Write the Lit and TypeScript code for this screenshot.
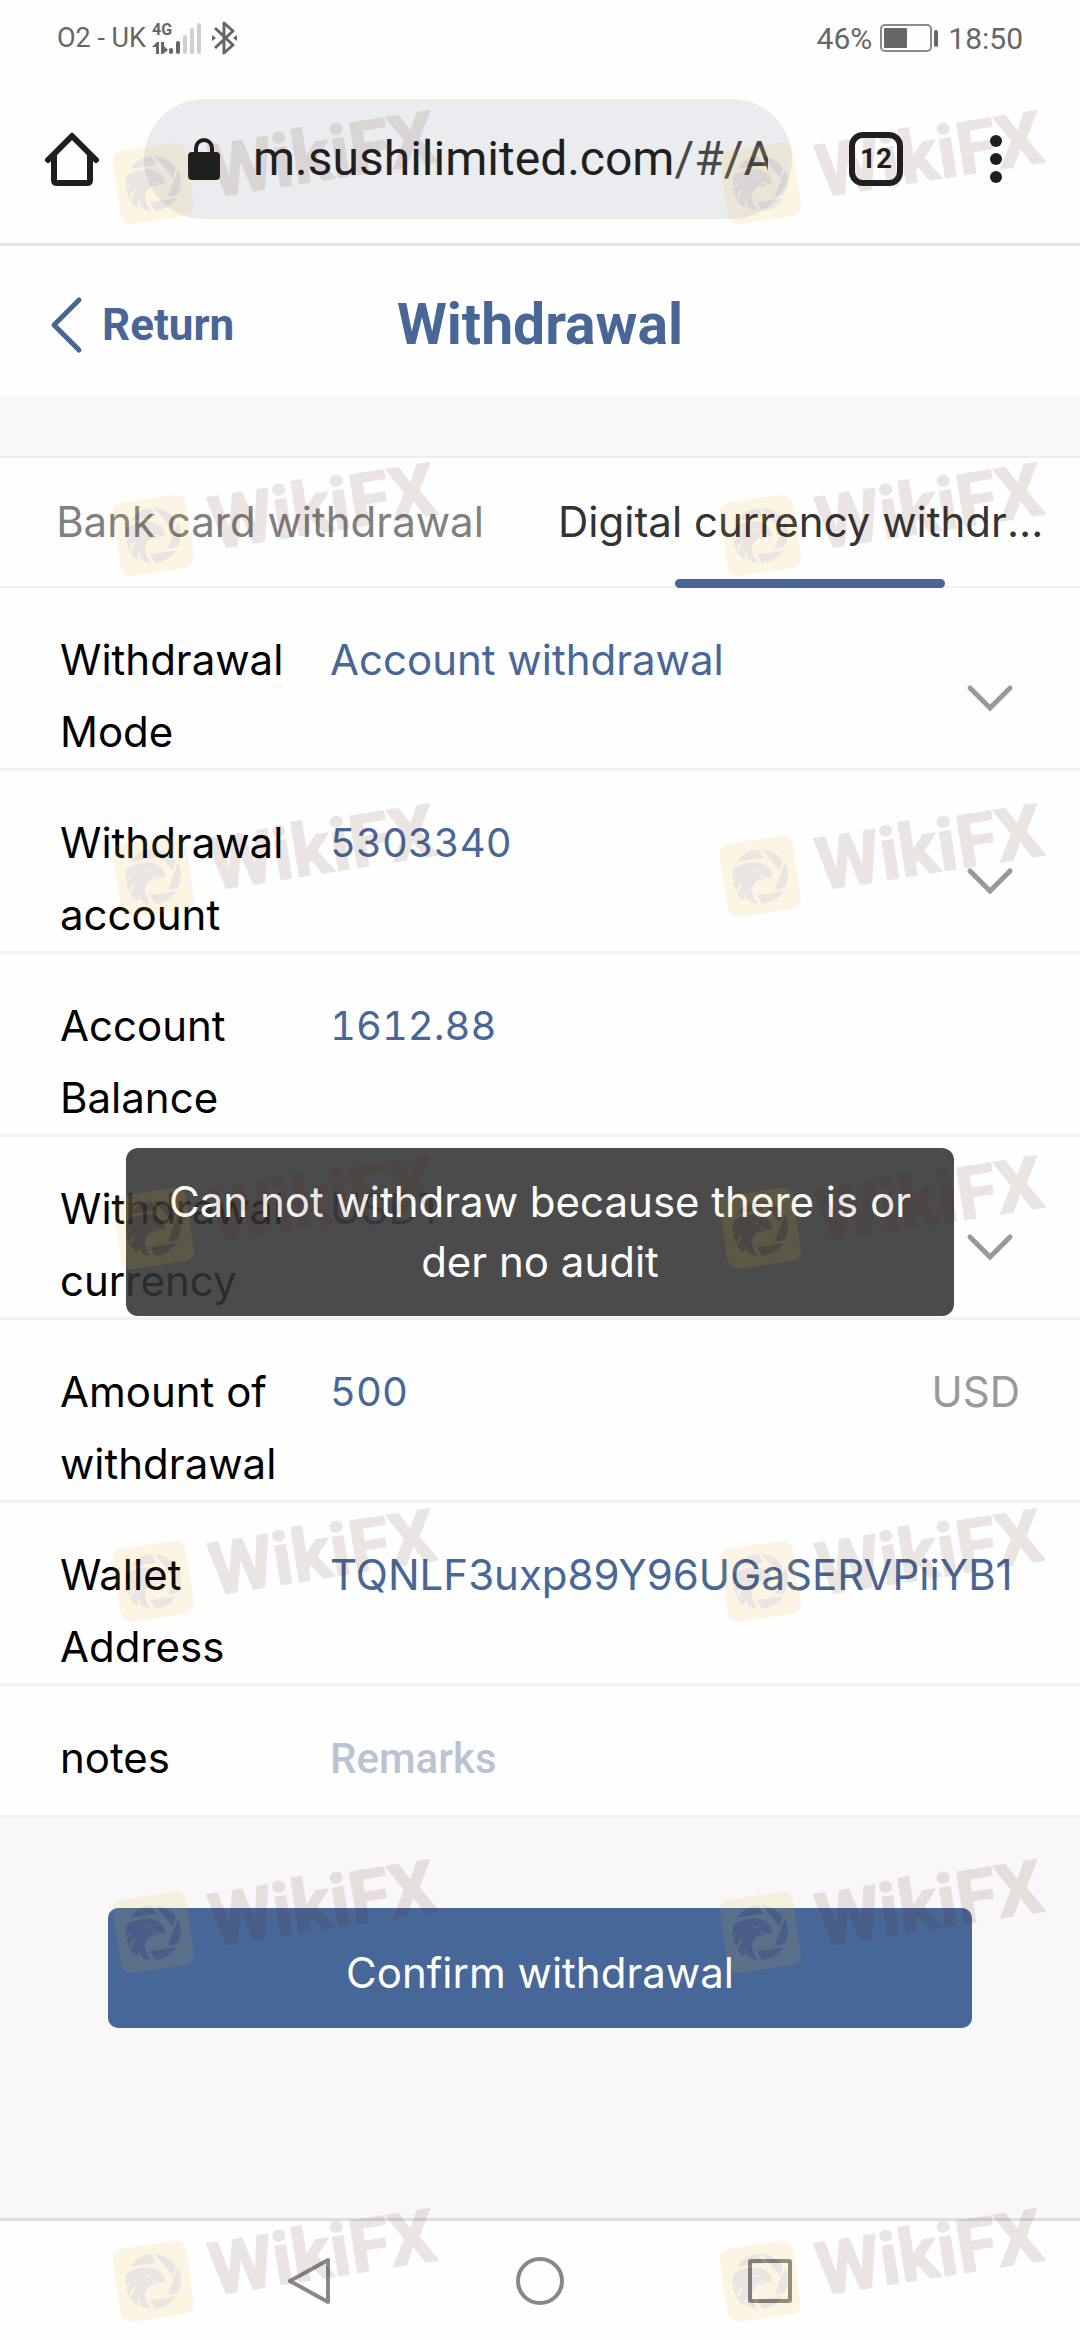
import { LitElement, html, css } from "lit";
import { customElement, property, state } from "lit/decorators.js";
import { classMap } from "lit/directives/class-map.js";

type FieldKind = "select" | "output" | "input";

interface Field {
  id: string;
  label: string;
  value: string;
  kind: FieldKind;
  numeric?: boolean;
  unit?: string;
  placeholder?: string;
}

const FIELDS: Field[] = [
  { id: "mode", label: "Withdrawal Mode", value: "Account withdrawal", kind: "select" },
  { id: "account", label: "Withdrawal account", value: "5303340", kind: "select", numeric: true },
  { id: "balance", label: "Account Balance", value: "1612.88", kind: "output", numeric: true },
  { id: "currency", label: "Withdrawal currency", value: "USDT", kind: "select" },
  { id: "amount", label: "Amount of withdrawal", value: "500", kind: "input", numeric: true, unit: "USD" },
  { id: "wallet", label: "Wallet Address", value: "TQNLF3uxp89Y96UGaSERVPiiYB1", kind: "input" },
  { id: "notes", label: "notes", value: "", kind: "input", placeholder: "Remarks" },
];

const MARK_TOPS = [86, 438, 779, 1131, 1484, 1835, 2184];
const MARK_LEFTS = [93, 700];

@customElement("status-bar")
export class StatusBar extends LitElement {
  static styles = css`
    :host {
      display: flex;
      justify-content: space-between;
      align-items: center;
      height: 76px;
      padding: 0 57px;
      color: #666;
      font-family: Roboto, "Liberation Sans", sans-serif;
    }
    .side {
      display: flex;
      align-items: center;
    }
    .carrier {
      font-size: 27px;
    }
    .signal {
      margin-left: 6px;
    }
    .bluetooth {
      margin-left: 8px;
    }
    .right {
      gap: 8px;
      font-size: 30px;
    }
    svg {
      display: block;
    }
    .net {
      font: 700 16px Roboto, sans-serif;
    }
  `;
  render() {
    return html`
      <div class="side">
        <span class="carrier">O2 - UK</span>
        <svg class="signal" width="52" height="34" viewBox="0 0 52 34" fill="currentColor">
          <text class="net" x="0" y="14">4G</text>
          <path d="M0 26l5-5h2v12H4v-7zM9 21h3v4l4 4-5 4H9z" />
          <rect x="17" y="27" width="4" height="6" rx="2" />
          <rect x="24" y="20" width="4" height="13" rx="2" />
          <g fill="#d0d0d0">
            <rect x="31" y="14" width="4" height="19" rx="2" />
            <rect x="38" y="7" width="4" height="26" rx="2" />
            <rect x="45" y="2" width="4" height="31" rx="2" />
          </g>
        </svg>
        <svg class="bluetooth" width="26" height="34" viewBox="0 0 26 34" fill="none" stroke="currentColor" stroke-width="3">
          <path d="M3 7l18 17-9 8V2l9 8L3 27" stroke-linejoin="round" />
          <path d="M0 14l4 3-4 3zM25 14l-4 3 4 3z" fill="currentColor" stroke="none" />
        </svg>
      </div>
      <div class="side right">
        <span>46%</span>
        <svg width="60" height="30" viewBox="0 0 60 30">
          <rect x="1" y="2" width="50" height="26" rx="4" fill="none" stroke="#8a8a8a" stroke-width="2" />
          <rect x="4" y="5" width="23" height="20" rx="1" fill="#666" />
          <rect x="54" y="7" width="4" height="17" rx="2" fill="#666" />
        </svg>
        <span>18:50</span>
      </div>
    `;
  }
}

@customElement("browser-bar")
export class BrowserBar extends LitElement {
  static styles = css`
    :host {
      display: flex;
      align-items: center;
      height: 120px;
      padding: 23px 66px 24px 45px;
      border-bottom: 3px solid #e1e2e2;
      color: #1f1f1f;
      font-family: Roboto, "Liberation Sans", sans-serif;
    }
    button {
      border: 0;
      padding: 0;
      background: none;
      color: inherit;
      font-family: inherit;
    }
    svg {
      display: block;
    }
    .omnibox {
      flex: 1;
      min-width: 0;
      height: 120px;
      margin: 0 57px 0 45px;
      padding: 0 24px 0 44px;
      border-radius: 60px;
      background: #ebecf0;
      display: flex;
      align-items: center;
      gap: 33px;
    }
    .url {
      flex: 1;
      min-width: 0;
      overflow: hidden;
      white-space: nowrap;
      text-align: left;
      font-size: 48px;
      line-height: 64px;
    }
    .path {
      color: #48484a;
    }
    .lock {
      flex: none;
    }
    .count {
      box-sizing: border-box;
      width: 54px;
      height: 54px;
      border: 6px solid #1f1f1f;
      border-radius: 14px;
      font-size: 28px;
      font-weight: 700;
      line-height: 42px;
    }
    .more {
      margin-left: 75px;
    }
  `;
  render() {
    return html`
      <button aria-label="Home">
        <svg width="54" height="54" viewBox="0 0 54 54" fill="none" stroke="currentColor" stroke-width="6">
          <path d="M9 23v25q0 3 3 3h30q3 0 3-3V23" />
          <path d="M3 28L27 4l24 24" stroke-linecap="round" stroke-linejoin="round" />
        </svg>
      </button>
      <button class="omnibox">
        <svg class="lock" width="32" height="44" viewBox="0 0 32 44">
          <rect y="15" width="32" height="28" rx="4" fill="currentColor" />
          <path d="M8 17v-6a8 8 0 0 1 16 0v6" fill="none" stroke="currentColor" stroke-width="4" />
        </svg>
        <span class="url">m.sushilimited.com<span class="path">/#/A</span></span>
      </button>
      <button class="count" aria-label="Open tabs">12</button>
      <button class="more" aria-label="Menu">
        <svg width="36" height="54" viewBox="0 0 36 54" fill="currentColor">
          <circle cx="18" cy="9" r="6" />
          <circle cx="18" cy="27" r="6" />
          <circle cx="18" cy="45" r="6" />
        </svg>
      </button>
    `;
  }
}

@customElement("form-row")
export class FormRow extends LitElement {
  @property({ attribute: false }) field!: Field;

  static styles = css`
    :host {
      display: flex;
      align-items: flex-start;
      min-height: 93px;
      padding: 36px 60px 0;
      border-bottom: 3px solid #eff2f5;
      font-size: 42px;
      line-height: 72px;
    }
    label {
      flex: none;
      box-sizing: border-box;
      width: 270px;
      padding-right: 36px;
      color: #000;
    }
    .value {
      flex: 1;
      min-width: 0;
      box-sizing: border-box;
      height: 72px;
      margin: 0;
      padding: 0;
      border: 0;
      outline: 0;
      border-radius: 0;
      background: transparent;
      appearance: none;
      color: #486796;
      font: inherit;
      opacity: 1;
    }
    .numeric {
      font-size: 40px;
      font-variant-numeric: tabular-nums;
    }
    .value::placeholder {
      color: #b9c4d3;
      opacity: 1;
      font-family: Roboto, "Liberation Sans", sans-serif;
      font-weight: 500;
    }
    .unit {
      color: #999;
    }
    .arrow {
      align-self: center;
      flex: none;
      margin-right: 6px;
    }
  `;

  private control() {
    const f = this.field;
    const classes = classMap({ value: true, numeric: !!f.numeric });
    if (f.kind === "select") {
      return html`
        <select class=${classes} id=${f.id}>
          <option>${f.value}</option>
        </select>
        <svg class="arrow" width="48" height="32" viewBox="0 0 48 32" fill="none" stroke="#999" stroke-width="5" stroke-linecap="round">
          <path d="M4 8l20 20L44 8" />
        </svg>
      `;
    }
    if (f.kind === "output") {
      return html`<output class=${classes} id=${f.id}>${f.value}</output>`;
    }
    return html`
      <input class=${classes} id=${f.id} type="text" .value=${f.value} placeholder=${f.placeholder ?? ""} />
      ${f.unit ? html`<span class="unit">${f.unit}</span>` : null}
    `;
  }

  render() {
    return html`<label for=${this.field.id}>${this.field.label}</label>${this.control()}`;
  }
}

@customElement("brand-mark")
export class BrandMark extends LitElement {
  static styles = css`
    :host {
      display: block;
      opacity: 0.11;
    }
    svg {
      display: block;
    }
    .word {
      font: 700 219px Roboto, "Liberation Sans", sans-serif;
      fill: #501e0a;
      stroke: #501e0a;
      stroke-width: 5px;
      stroke-linejoin: round;
    }
  `;
  render() {
    return html`
      <svg width="380" height="160" viewBox="0 0 1140 480" aria-hidden="true">
        <rect x="70" y="181" width="222" height="222" rx="30" transform="rotate(-8.5 181 292)" fill="#eeb71a" />
        <g fill="#501e0a">
          <path d="M112 249A82 82 0 0 1 176 210L190 236Z" />
          <path d="M184 210A82 82 0 0 1 248 246L240 275Z" />
          <path d="M255 250A82 82 0 0 1 252 328L224 333Z" />
          <path d="M171 349L250 336A82 82 0 0 1 186 374Z" />
          <path d="M102 268Q140 246 176 251Q205 256 215 284L214 298Q206 292 196 297Q184 304 176 301Q158 312 155 334Q158 354 173 374Q155 372 146 366Q138 356 138 335Q132 350 136 365Q116 356 110 338Q100 322 98 300Q97 282 102 268Z" />
        </g>
        <path d="M155 270q10 8 20 3l-2 6q-12 1-18-9zM176 295q12-8 28-4l-26 6zM100 304q8-10 16-13-10 12-16 22zM110 334q6-18 20-28-10 16-14 34z" fill="#eeb71a" />
        <text class="word" x="362" y="334" transform="rotate(-9 362 334)">WikiFX</text>
      </svg>
    `;
  }
}

@customElement("app-root")
export class AppRoot extends LitElement {
  @state() private active = 1;

  static styles = css`
    :host {
      display: flex;
      flex-direction: column;
      position: relative;
      min-height: 100vh;
      overflow: hidden;
      background: #fefefe;
      font-family: Inter, "Liberation Sans", sans-serif;
    }
    button {
      border: 0;
      padding: 0;
      background: none;
      font: inherit;
      color: inherit;
    }
    svg {
      display: block;
    }
    main {
      flex: 1;
      position: relative;
      background: #f9f7f8;
    }
    .header {
      display: grid;
      grid-template-columns: 1fr auto 1fr;
      align-items: center;
      height: 150px;
      padding: 8px 48px 0;
      box-sizing: border-box;
      background: #fefefe;
      color: #486796;
      font-family: Roboto, "Liberation Sans", sans-serif;
      font-weight: 700;
    }
    .back {
      justify-self: start;
      display: flex;
      align-items: center;
      gap: 18px;
      font-size: 44px;
      text-decoration: none;
      color: inherit;
    }
    h1 {
      margin: 0;
      font-size: 57px;
      line-height: 72px;
    }
    .tabs {
      display: grid;
      grid-template-columns: 1fr 1fr;
      margin-top: 60px;
      background: #fefefe;
      border-top: 2px solid #ebefef;
      border-bottom: 2px solid #eff1f1;
    }
    .tab {
      display: flex;
      flex-direction: column;
      align-items: center;
      min-width: 0;
      height: 128px;
      padding: 0 18px;
      color: #808080;
      font-size: 42px;
      position: relative;
    }
    .tab-text {
      max-width: 100%;
      overflow: hidden;
      text-overflow: ellipsis;
      white-space: nowrap;
      line-height: 128px;
    }
    .tab.on {
      color: #333;
    }
    .tab.on::after {
      content: "";
      position: absolute;
      bottom: -2px;
      width: 50%;
      height: 9px;
      border-radius: 5px;
      background: #486796;
    }
    .form {
      background: #fefefe;
    }
    .confirm {
      display: block;
      width: 80%;
      height: 120px;
      margin: 90px auto 0;
      padding-top: 8px;
      border-radius: 10px;
      background: #486799;
      color: #fff;
      font-size: 42px;
    }
    .toast {
      position: absolute;
      top: 50%;
      left: 126px;
      right: 126px;
      transform: translateY(-50%);
      padding: 24px 36px;
      border-radius: 12px;
      background: rgba(50, 50, 50, 0.88);
      color: #fff;
      font-size: 42px;
      line-height: 60px;
      text-align: center;
      word-break: break-all;
    }
    .nav {
      display: flex;
      justify-content: center;
      align-items: center;
      gap: 180px;
      height: 119px;
      border-top: 3px solid #e0dfdf;
      background: #fefefe;
    }
    .marks {
      position: absolute;
      inset: 0;
      pointer-events: none;
    }
    .mark {
      position: absolute;
    }
  `;

  render() {
    return html`
      <status-bar></status-bar>
      <browser-bar></browser-bar>
      <main>
        <header class="header">
          <a class="back" href="#back">
            <svg width="36" height="58" viewBox="0 0 36 58" fill="none" stroke="currentColor" stroke-width="5" stroke-linecap="round" stroke-linejoin="round">
              <path d="M31 4L6 29l25 25" />
            </svg>
            <span>Return</span>
          </a>
          <h1>Withdrawal</h1>
        </header>
        <div class="tabs" role="tablist">
          ${["Bank card withdrawal", "Digital currency withdrawal"].map(
            (name, i) => html`
              <button
                class=${classMap({ tab: true, on: i === this.active })}
                role="tab"
                aria-selected=${i === this.active}
                @click=${() => (this.active = i)}
              >
                <span class="tab-text">${name}</span>
              </button>
            `,
          )}
        </div>
        <div class="form">${FIELDS.map((f) => html`<form-row .field=${f}></form-row>`)}</div>
        <button class="confirm">Confirm withdrawal</button>
        <div class="toast" role="alert">Can not withdraw because there is order no audit</div>
      </main>
      <nav class="nav">
        <button aria-label="Back">
          <svg width="50" height="50" viewBox="0 0 50 50" fill="none" stroke="#888" stroke-width="4" stroke-linejoin="round">
            <path d="M43 4v42L5 25z" />
          </svg>
        </button>
        <button aria-label="Home">
          <svg width="50" height="50" viewBox="0 0 50 50" fill="none" stroke="#888" stroke-width="4">
            <circle cx="25" cy="25" r="22" />
          </svg>
        </button>
        <button aria-label="Recent apps">
          <svg width="50" height="50" viewBox="0 0 50 50" fill="none" stroke="#888" stroke-width="4">
            <rect x="5" y="5" width="40" height="40" rx="1" />
          </svg>
        </button>
      </nav>
      <div class="marks">
        ${MARK_TOPS.flatMap((top) =>
          MARK_LEFTS.map(
            (left) => html`<brand-mark class="mark" style="top:${top}px;left:${left}px"></brand-mark>`,
          ),
        )}
      </div>
    `;
  }
}
